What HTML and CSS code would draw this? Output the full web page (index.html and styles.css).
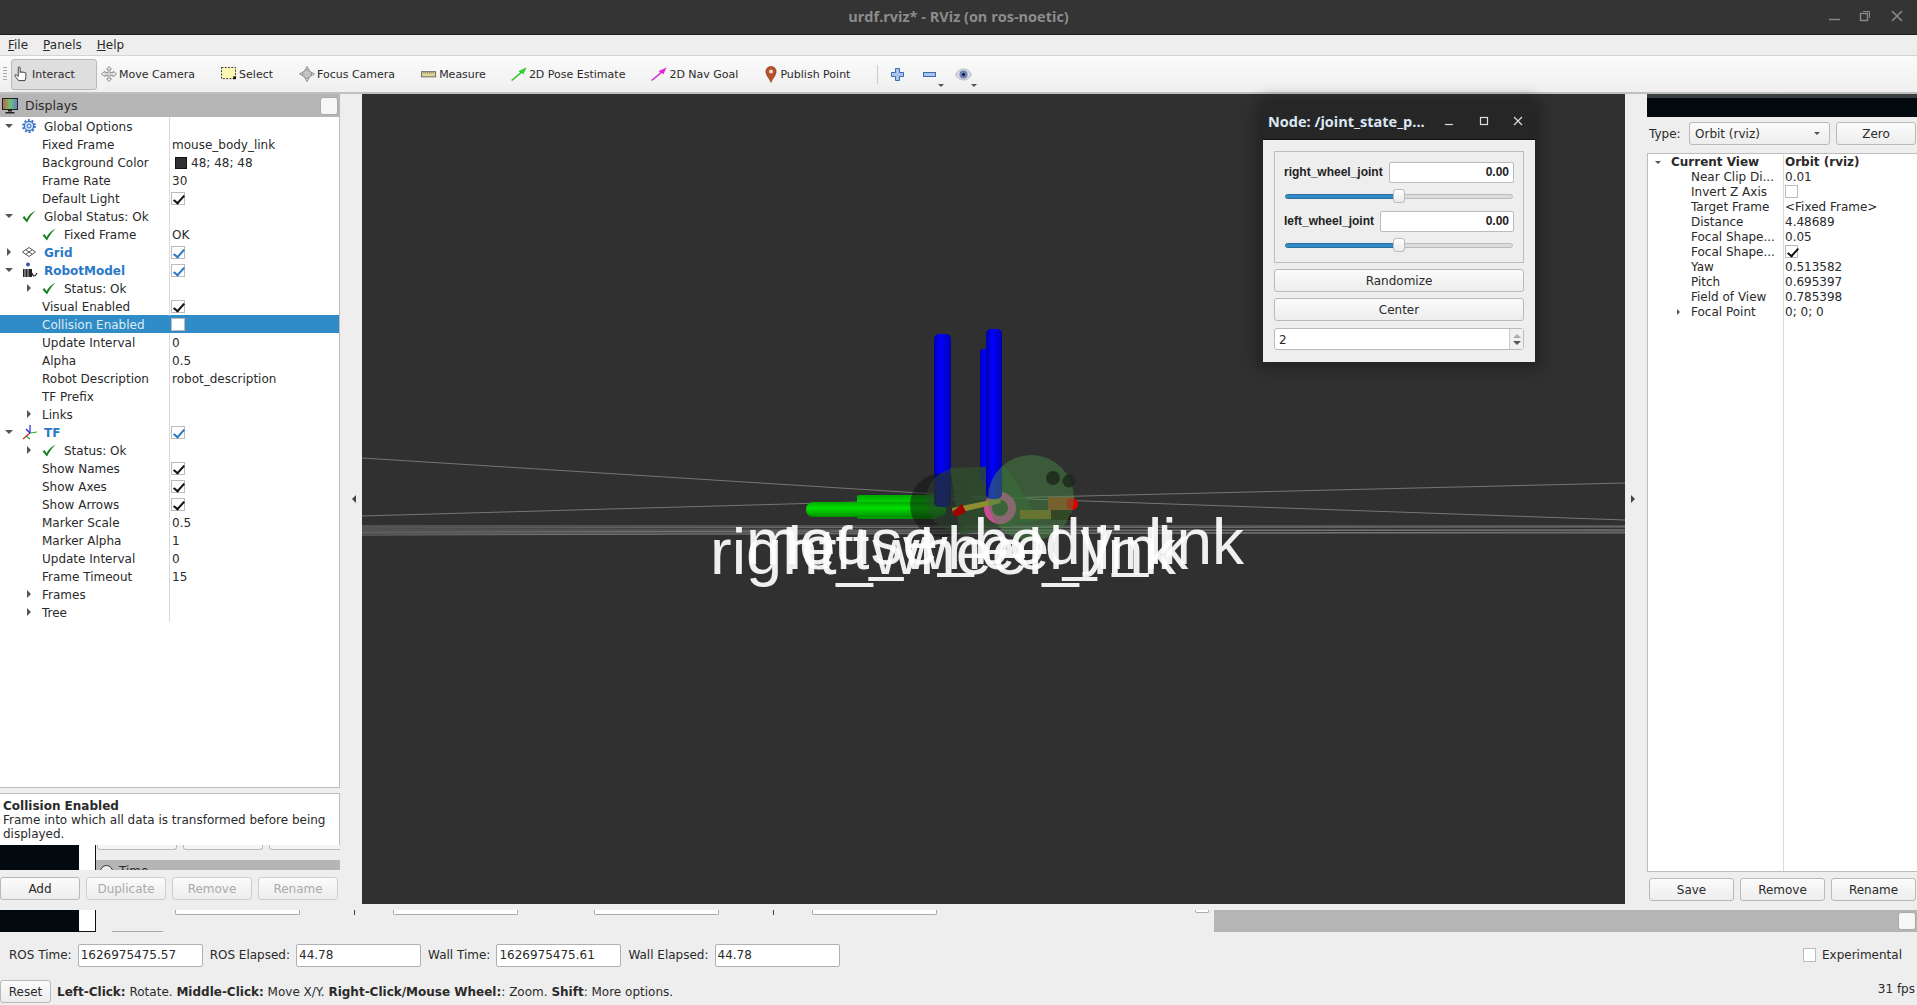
FILE: index.html
```html
<!DOCTYPE html>
<html lang="en">
<head>
<meta charset="utf-8">
<title>urdf.rviz* - RViz (on ros-noetic)</title>
<link rel="stylesheet" href="styles.css">
</head>
<body>
<div class="app">
  <header class="titlebar">
    <span class="title-text">urdf.rviz* - RViz (on ros-noetic)</span>
    <div class="wm-buttons">
      <svg width="14" height="14" viewBox="0 0 14 14"><path d="M1 10.5h11" stroke="#8a8a8a" stroke-width="1.4" fill="none"/></svg>
      <svg width="14" height="14" viewBox="0 0 14 14" fill="none" stroke="#8a8a8a"><rect x="1.5" y="4.5" width="7" height="7" stroke-width="1.4"/><path d="M4 2.5h6.5V9"/></svg>
      <svg width="14" height="14" viewBox="0 0 14 14"><path d="M2 2l10 10M12 2L2 12" stroke="#8a8a8a" stroke-width="1.6" fill="none"/></svg>
    </div>
  </header>
  <nav class="menubar">
    <span><u>F</u>ile</span><span><u>P</u>anels</span><span><u>H</u>elp</span>
  </nav>
  <div class="toolbar">
    <div class="grip"></div>
    <div class="tool active">
      <svg width="16" height="16" viewBox="0 0 17 17"><path d="M5 15.5C3 13 1.5 11.5 1 10c0-1.2 1.2-1 2-.2l1.5 1.4V2c0-1.4 2-1.4 2 0v5c.2-1.2 2-1.2 2.1 0 .3-1 2-1 2 .3.4-.9 2-.7 2 .6v3.5c0 1.800-.5 3-1 4.100z" fill="#fff" stroke="#222" stroke-width=".9"/></svg>
      <span>Interact</span>
    </div>
    <div class="tool">
      <svg width="16" height="16" viewBox="0 0 17 17" fill="none" stroke="#888"><path d="M8.500.5l2.500 3H9.500v3.500H13V5.500l3.500 3-3.500 3V10H9.500v3.500H11l-2.500 3-2.500-3h1.500V10H4v1.500l-3.500-3 3.500-3V7h3.500V3.500H6z" fill="#f4f4f4"/><path d="M8.500 4v9M4 8.500h9" stroke="#bbb"/></svg>
      <span>Move Camera</span>
    </div>
    <div class="tool">
      <svg width="16" height="14" viewBox="0 0 17 15"><rect x=".5" y=".5" width="15" height="12" fill="#fbf7b0" stroke="#222" stroke-dasharray="2 1.500"/><rect x="13" y="10" width="3" height="3" fill="#111"/></svg>
      <span>Select</span>
    </div>
    <div class="tool">
      <svg width="16" height="16" viewBox="0 0 17 17" fill="none" stroke="#888"><path d="M8.500.5l2 3.500h-4zM8.500 16.500l2-3.500h-4zM.5 8.500L4 6.500v4zM16.500 8.500L13 6.500v4z" fill="#eee"/><circle cx="8.500" cy="8.500" r="4.500" fill="#e8e8e8"/><path d="M8.500 4v9M4 8.500h9M6.200 4.500v8M10.800 4.500v8M4.500 6.200h8M4.500 10.800h8" stroke="#999" stroke-width=".6"/></svg>
      <span>Focus Camera</span>
    </div>
    <div class="tool tight">
      <svg width="16" height="9" viewBox="0 0 17 9"><rect x=".5" y="1.500" width="15" height="5.500" fill="#dfd68f" stroke="#666"/><path d="M3 1.500v2M5 1.500v2M7 1.500v2M9 1.500v2M11 1.500v2M13 1.500v2" stroke="#666" stroke-width=".7"/></svg>
      <span>Measure</span>
    </div>
    <div class="tool">
      <svg width="16" height="14" viewBox="0 0 17 14"><path d="M.5 13.500L10 5.500 8.500 4 16 .5 13 7l-1.500-1.300L1.500 14z" fill="#1ee61e" stroke="#0a8a0a" stroke-width=".4"/></svg>
      <span>2D Pose Estimate</span>
    </div>
    <div class="tool">
      <svg width="16" height="14" viewBox="0 0 17 14"><path d="M.5 13.500L10 5.500 8.500 4 16 .5 13 7l-1.500-1.300L1.500 14z" fill="#f01ee0" stroke="#a010a0" stroke-width=".4"/></svg>
      <span>2D Nav Goal</span>
    </div>
    <div class="tool pin-tool">
      <svg width="12" height="17" viewBox="0 0 12 17"><path d="M6 16.500C4.500 12.500.8 9.500.8 5.500a5.200 5.200 0 0 1 10.400 0C11.200 9.500 7.500 12.500 6 16.500z" fill="#b5502a" stroke="#7a3a1a" stroke-width=".5"/><circle cx="6" cy="5.500" r="2" fill="#f5e0d0"/></svg>
      <span>Publish Point</span>
    </div>
    <div class="tool-sep"></div>
    <div class="mini-tool">
      <svg width="13" height="13" viewBox="0 0 13 13"><path d="M4.500.5h4v4h4v4h-4v4h-4v-4h-4v-4h4z" fill="#a9c4e8" stroke="#3b6cb0"/></svg>
    </div>
    <div class="mini-tool">
      <svg width="13" height="13" viewBox="0 0 13 13"><rect x=".5" y="4.500" width="12" height="4" fill="#a9c4e8" stroke="#3b6cb0"/></svg>
      <i class="drop"></i>
    </div>
    <div class="mini-tool">
      <svg width="17" height="13" viewBox="0 0 17 13"><path d="M.5 6.500C3 2 6 1 8.500 1s5.500 1 8 5.500c-2.500 4.500-5.500 5.500-8 5.500S3 11 .5 6.500z" fill="#d5d8e8" stroke="#999" stroke-width=".6"/><circle cx="8.500" cy="6.500" r="4" fill="#6a80b8"/><circle cx="8.500" cy="6.500" r="1.500" fill="#111"/></svg>
      <i class="drop"></i>
    </div>
  </div>

  <main class="main">
    <section class="left-col">
      <div class="dock-head">
        <svg width="16" height="16" viewBox="0 0 16 16"><defs><linearGradient id="mon" x1="0" x2="1"><stop offset="0" stop-color="#c45a5a"/><stop offset=".5" stop-color="#6ac46a"/><stop offset="1" stop-color="#6a7ad0"/></linearGradient></defs><rect x=".5" y=".5" width="15" height="11" fill="url(#mon)" stroke="#222"/><path d="M6 12h4v1.500H6zM3.500 14h9v1.500h-9z" fill="#222"/></svg>
        <span class="dock-title">Displays</span>
        <span class="dock-btn"></span>
      </div>
      <div class="tree">
        <div class="row"><div class="name"><i class="slot l0"><b class="open"></b></i><i class="ico"><svg width="14" height="14" viewBox="0 0 14 14"><circle cx="7" cy="7" r="4.700" fill="#cfe0f8" stroke="#3a72c8" stroke-width="1.200"/><circle cx="7" cy="7" r="6" fill="none" stroke="#3a72c8" stroke-width="1.800" stroke-dasharray="2 1.770"/><circle cx="7" cy="7" r="2" fill="none" stroke="#3a72c8"/></svg></i><span>Global Options</span></div><div class="val"></div></div>
        <div class="row"><div class="name l1">Fixed Frame</div><div class="val">mouse_body_link</div></div>
        <div class="row"><div class="name l1">Background Color</div><div class="val swatch-val"><i class="swatch"></i>48; 48; 48</div></div>
        <div class="row"><div class="name l1">Frame Rate</div><div class="val">30</div></div>
        <div class="row"><div class="name l1">Default Light</div><div class="val"><i class="cb on"></i></div></div>
        <div class="row"><div class="name"><i class="slot l0"><b class="open"></b></i><i class="ico"><svg class="ok" width="14" height="13" viewBox="0 0 14 13"><path d="M.5 7.500L2.500 6l2 3.200C6.500 5.500 9.500 2.500 13.500.5 10.500 3.500 7.500 7.500 5 12.500z"/></svg></i><span>Global Status: Ok</span></div><div class="val"></div></div>
        <div class="row"><div class="name l1"><i class="ico"><svg class="ok" width="14" height="13" viewBox="0 0 14 13"><path d="M.5 7.500L2.500 6l2 3.200C6.500 5.500 9.500 2.500 13.500.5 10.500 3.500 7.500 7.500 5 12.500z"/></svg></i><span>Fixed Frame</span></div><div class="val">OK</div></div>
        <div class="row"><div class="name blue"><i class="slot l0"><b class="closed"></b></i><i class="ico"><svg width="14" height="10" viewBox="0 0 14 10" fill="none" stroke="#444" stroke-width=".9"><path d="M7 .5l6.500 4.500L7 9.500.5 5zM3.800 2.800l6.500 4.500M10.200 2.800L3.800 7.300"/></svg></i><span>Grid</span></div><div class="val"><i class="cb on blue-check"></i></div></div>
        <div class="row"><div class="name blue"><i class="slot l0"><b class="open"></b></i><i class="ico"><svg width="16" height="16" viewBox="0 0 16 16"><circle cx="6" cy="2.500" r="2" fill="#3355aa"/><rect x="1" y="7" width="9" height="8" fill="#222"/><path d="M3 7v8M6 7v8" stroke="#eee" stroke-width=".8"/><path d="M10 11c1 4 3 4 5 0" fill="none" stroke="#222" stroke-width="1.200"/></svg></i><span>RobotModel</span></div><div class="val"><i class="cb on blue-check"></i></div></div>
        <div class="row"><div class="name l1"><i class="slot l1s"><b class="closed"></b></i><i class="ico"><svg class="ok" width="14" height="13" viewBox="0 0 14 13"><path d="M.5 7.500L2.500 6l2 3.200C6.500 5.500 9.500 2.500 13.500.5 10.500 3.500 7.500 7.500 5 12.500z"/></svg></i><span>Status: Ok</span></div><div class="val"></div></div>
        <div class="row"><div class="name l1">Visual Enabled</div><div class="val"><i class="cb on"></i></div></div>
        <div class="row selected"><div class="name l1">Collision Enabled</div><div class="val"><i class="cb"></i></div></div>
        <div class="row"><div class="name l1">Update Interval</div><div class="val">0</div></div>
        <div class="row"><div class="name l1">Alpha</div><div class="val">0.5</div></div>
        <div class="row"><div class="name l1">Robot Description</div><div class="val">robot_description</div></div>
        <div class="row"><div class="name l1">TF Prefix</div><div class="val"></div></div>
        <div class="row"><div class="name l1"><i class="slot l1s"><b class="closed"></b></i><span class="noicon">Links</span></div><div class="val"></div></div>
        <div class="row"><div class="name blue"><i class="slot l0"><b class="open"></b></i><i class="ico"><svg width="16" height="15" viewBox="0 0 16 15" fill="none" stroke-width="1.200"><path d="M8 8l-7 6" stroke="#e02020"/><path d="M8 8V0" stroke="#2020e0"/><path d="M8 8l7-1" stroke="#20b020"/><path d="M4 11l4 3" stroke="#20b020"/><path d="M8 8L4 4" stroke="#2020e0"/></svg></i><span>TF</span></div><div class="val"><i class="cb on blue-check"></i></div></div>
        <div class="row"><div class="name l1"><i class="slot l1s"><b class="closed"></b></i><i class="ico"><svg class="ok" width="14" height="13" viewBox="0 0 14 13"><path d="M.5 7.500L2.500 6l2 3.200C6.500 5.500 9.500 2.500 13.500.5 10.500 3.500 7.500 7.500 5 12.500z"/></svg></i><span>Status: Ok</span></div><div class="val"></div></div>
        <div class="row"><div class="name l1">Show Names</div><div class="val"><i class="cb on"></i></div></div>
        <div class="row"><div class="name l1">Show Axes</div><div class="val"><i class="cb on"></i></div></div>
        <div class="row"><div class="name l1">Show Arrows</div><div class="val"><i class="cb on"></i></div></div>
        <div class="row"><div class="name l1">Marker Scale</div><div class="val">0.5</div></div>
        <div class="row"><div class="name l1">Marker Alpha</div><div class="val">1</div></div>
        <div class="row"><div class="name l1">Update Interval</div><div class="val">0</div></div>
        <div class="row"><div class="name l1">Frame Timeout</div><div class="val">15</div></div>
        <div class="row"><div class="name l1"><i class="slot l1s"><b class="closed"></b></i><span class="noicon">Frames</span></div><div class="val"></div></div>
        <div class="row"><div class="name l1"><i class="slot l1s"><b class="closed"></b></i><span class="noicon">Tree</span></div><div class="val"></div></div>
      </div>
      <div class="h-split"></div>
      <div class="desc"><strong>Collision Enabled</strong><br>Frame into which all data is transformed before being displayed.</div>
      <div class="glitch-left">
        <div class="black"></div>
        <div class="glitch-white"></div>
        <div class="glitch-stack">
          <div class="glitch-btns"><i></i><i></i><i></i></div>
          <div class="glitch-time"><i class="clock"></i><span>Time</span></div>
        </div>
      </div>
      <div class="btn-row">
        <button class="btn">Add</button>
        <button class="btn dis">Duplicate</button>
        <button class="btn dis">Remove</button>
        <button class="btn dis">Rename</button>
      </div>
    </section>

    <div class="v-split"><i class="tri-left"></i></div>

    <div class="viewport">
      <svg class="scene" width="1263" height="810" viewBox="362 94 1263 810">
        <defs>
          <linearGradient id="cyl" x1="0" x2="1"><stop offset="0" stop-color="#0000a8"/><stop offset=".4" stop-color="#0000ff"/><stop offset="1" stop-color="#0000b0"/></linearGradient>
          <linearGradient id="gr" x1="0" x2="0" y1="0" y2="1"><stop offset="0" stop-color="#00a800"/><stop offset=".4" stop-color="#00e000"/><stop offset="1" stop-color="#009000"/></linearGradient>
          <filter id="soft" x="-5%" y="-20%" width="110%" height="140%"><feGaussianBlur stdDeviation=".7"/></filter>
        </defs>
        <g stroke="#9a9a9a" stroke-width="1" fill="none" opacity=".65">
          <path d="M362 458L1000 498L1625 520"/>
          <path d="M362 516L1000 498L1625 483"/>
          <path d="M362 526H1625M362 528L1625 527M362 530H1625M362 532L1625 530M362 533H1625M362 535L1625 532"/>
        </g>
        <rect x="857" y="495" width="80" height="24" rx="2" fill="url(#gr)"/>
        <rect x="806" y="502" width="140" height="15" rx="7" fill="url(#gr)"/>
        <rect x="980" y="349" width="10" height="135" rx="3" fill="url(#cyl)"/>
        <rect x="934" y="334" width="17" height="173" rx="5" fill="url(#cyl)"/>
        <circle cx="942" cy="505" r="32" fill="#101010" fill-opacity=".5"/>
        <path d="M950 468L1005 466L1040 520L960 535Z" fill="#304c30" fill-opacity=".8"/>
        <circle cx="958" cy="500" r="32" fill="#2e4c2e" fill-opacity=".45"/>
        <circle cx="1000" cy="508" r="12" fill="none" stroke="#cc4c98" stroke-width="8"/>
        <path d="M952 508L1000 498L1001 503L953 514Z" fill="#8e8e30"/>
        <path d="M952 512L962 504L966 512L956 517Z" fill="#a00000"/>
        <rect x="1048" y="497" width="26" height="13" fill="#a84018"/>
        <rect x="1020" y="510" width="31" height="9" fill="#8a6420"/>
        <rect x="1051" y="510" width="20" height="10" fill="#200c08"/>
        <circle cx="1072" cy="504" r="6" fill="#e00000"/>
        <rect x="986" y="329" width="16" height="170" rx="5" fill="url(#cyl)"/>
        <circle cx="1031" cy="498" r="43" fill="#448444" fill-opacity=".5"/>
        <circle cx="1053" cy="478" r="7" fill="#1c2a1c" fill-opacity=".85"/>
        <circle cx="1069" cy="481" r="6.500" fill="#1c2a1c" fill-opacity=".85"/>
        <g class="labels" filter="url(#soft)">
          <text class="lab-right" x="710" y="574">right_wheel_link</text>
          <text class="lab-left" x="788" y="569">left_wheel_link</text>
          <text class="lab-mouse" x="746" y="564">mouse_body_link</text>
        </g>
      </svg>
    </div>

    <div class="v-split"><i class="tri-right"></i></div>

    <aside class="right-col">
      <div class="black-top"></div>
      <div class="type-row">
        <label>Type:</label>
        <div class="select">Orbit (rviz)<b class="open small"></b></div>
        <button class="btn zero">Zero</button>
      </div>
      <div class="view-tree">
        <div class="vrow strong"><div class="vname"><b class="open small vopen"></b>Current View</div><div class="vval">Orbit (rviz)</div></div>
        <div class="vrow"><div class="vname sub">Near Clip Di...</div><div class="vval">0.01</div></div>
        <div class="vrow"><div class="vname sub">Invert Z Axis</div><div class="vval"><i class="cb"></i></div></div>
        <div class="vrow"><div class="vname sub">Target Frame</div><div class="vval">&lt;Fixed Frame&gt;</div></div>
        <div class="vrow"><div class="vname sub">Distance</div><div class="vval">4.48689</div></div>
        <div class="vrow"><div class="vname sub">Focal Shape...</div><div class="vval">0.05</div></div>
        <div class="vrow"><div class="vname sub">Focal Shape...</div><div class="vval"><i class="cb on"></i></div></div>
        <div class="vrow"><div class="vname sub">Yaw</div><div class="vval">0.513582</div></div>
        <div class="vrow"><div class="vname sub">Pitch</div><div class="vval">0.695397</div></div>
        <div class="vrow"><div class="vname sub">Field of View</div><div class="vval">0.785398</div></div>
        <div class="vrow"><div class="vname sub"><b class="closed vclosed"></b>Focal Point</div><div class="vval">0; 0; 0</div></div>
        <div class="vfill"><div class="vfill-l"></div></div>
      </div>
      <div class="btn-row right">
        <button class="btn">Save</button>
        <button class="btn">Remove</button>
        <button class="btn">Rename</button>
      </div>
    </aside>
  </main>

  <div class="glitch-strip">
    <div class="black"></div>
    <div class="glitch-white"></div>
    <i class="r0"></i><i class="rem r1"></i><i class="tick t1"></i><i class="rem r2"></i><i class="rem r3"></i><i class="tick t2"></i><i class="rem r4"></i><i class="rem r5"></i>
    <div class="gray-bar"><span class="dock-btn"></span></div>
  </div>

  <div class="time-row">
    <label>ROS Time:</label><input class="time-input" value="1626975475.57">
    <label>ROS Elapsed:</label><input class="time-input" value="44.78">
    <label>Wall Time:</label><input class="time-input" value="1626975475.61">
    <label>Wall Elapsed:</label><input class="time-input" value="44.78">
    <span class="spacer"></span>
    <i class="cb exp"></i><label>Experimental</label>
  </div>

  <div class="status-row">
    <button class="btn reset">Reset</button>
    <span class="hint"><strong>Left-Click:</strong> Rotate. <strong>Middle-Click:</strong> Move X/Y. <strong>Right-Click/Mouse Wheel:</strong>: Zoom. <strong>Shift</strong>: More options.</span>
    <span class="spacer"></span>
    <span class="fps">31 fps</span>
  </div>

  <div class="node-window">
    <div class="node-title">
      <span>Node: /joint_state_p...</span>
      <div class="node-wm">
        <svg width="12" height="12" viewBox="0 0 12 12"><path d="M1 9.500h8" stroke="#ddd" stroke-width="1.200"/></svg>
        <svg width="12" height="12" viewBox="0 0 12 12"><rect x="2.500" y="2.500" width="7" height="7" fill="none" stroke="#ddd" stroke-width="1.200"/></svg>
        <svg width="12" height="12" viewBox="0 0 12 12"><path d="M2 2l8 8M10 2l-8 8" stroke="#ddd" stroke-width="1.200"/></svg>
      </div>
    </div>
    <div class="node-body">
      <div class="joint-box">
        <div class="joint-line"><span class="joint-name">right_wheel_joint</span><input class="joint-input" value="0.00"></div>
        <div class="slider"><div class="slider-fill"></div><div class="slider-handle"></div></div>
        <div class="joint-line"><span class="joint-name">left_wheel_joint</span><input class="joint-input" value="0.00"></div>
        <div class="slider"><div class="slider-fill"></div><div class="slider-handle"></div></div>
      </div>
      <button class="btn wide">Randomize</button>
      <button class="btn wide">Center</button>
      <div class="spin"><span class="spin-val">2</span><div class="spin-arrows"><b class="up"></b><b class="down"></b></div></div>
    </div>
  </div>
</div>
</body>
</html>
```
FILE: styles.css
```css
* { box-sizing: border-box; }
html, body { margin: 0; padding: 0; overflow: hidden; }
body { font-family: "DejaVu Sans", sans-serif; font-size: 12px; color: #2a2a2a; background: #eee; }
i, b { font-style: normal; display: inline-block; }

.app { width: 1917px; height: 1005px; display: flex; flex-direction: column; position: relative; overflow: hidden; background: #eee; }

.titlebar { height: 35px; flex: none; background: #343434; border-bottom: 1px solid #1c1c1c; display: flex; align-items: center; justify-content: center; position: relative; }
.title-text { font-family: "Open Sans", sans-serif; font-weight: 700; font-size: 14.5px; color: #8c8c8c; margin-top: -2px; }
.wm-buttons { position: absolute; right: 13px; top: 9px; display: flex; gap: 17px; }

.menubar { height: 20px; flex: none; background: #eee; display: flex; padding-left: 8px; gap: 15px; align-items: center; font-size: 12px; }
.menubar u { text-decoration: underline; }

.toolbar { height: 39px; flex: none; display: flex; align-items: center; gap: 3px; background: linear-gradient(#fbfbfb, #efefef); border-top: 1px solid #d4d4d4; border-bottom: 2px solid #bfbfbf; padding-left: 3px; font-size: 11px; }
.grip { width: 4px; height: 16px; margin-right: 1px; background-image: radial-gradient(#aaa 40%, transparent 45%); background-size: 2px 3px; }
.tool { height: 31px; display: flex; align-items: center; gap: 2px; padding: 0 22px 0 1px; white-space: nowrap; }
.tool span { padding-top: 1px; }
.tool.active { background: #dedede; border: 1px solid #b8b8b8; border-radius: 3px; padding: 0 21px 0 2px; }
.tool.tight { padding-right: 21px; }
.tool svg { flex: none; }
.pin-tool { gap: 3px; padding-left: 2px; padding-right: 24px; }
.tool-sep { width: 1px; height: 19px; background: #ccc; margin-right: 10px; }
.mini-tool { width: 29px; height: 31px; display: flex; align-items: center; position: relative; }
.drop { position: absolute; left: 15px; bottom: 3px; width: 0; height: 0; border: 3px solid transparent; border-top: 3px solid #555; border-bottom: 0; }
.mini-tool:last-child .drop { left: 16px; }

.main { height: 810px; flex: none; display: flex; }

.left-col { width: 340px; flex: none; display: flex; flex-direction: column; }
.dock-head { height: 23px; flex: none; background: #b5b5b5; display: flex; align-items: center; padding: 0 2px 0 2px; gap: 7px; }
.dock-title { flex: 1; font-size: 12.5px; }
.dock-btn { width: 18px; height: 18px; background: #f6f6f6; border: 1px solid #aaa; border-radius: 3px; display: block; }

.tree { flex: 1; min-height: 0; background: #fff; border-right: 1px solid #bdbdbd; border-bottom: 1px solid #bdbdbd; }
.row { height: 18px; display: grid; grid-template-columns: 170px 1fr; line-height: 18px; }
.name { display: flex; align-items: center; border-right: 1px solid #d9d9d9; height: 100%; white-space: nowrap; padding-top: 1px; }
.name.l1 { padding-left: 42px; }
.name.l1:has(.slot) { padding-left: 20px; }
.name.blue span { color: #2b78c8; font-weight: 700; }
.slot { width: 22px; height: 17px; display: flex; align-items: center; padding-left: 5px; margin-top: -2px; }
.slot .closed { margin-left: 2px; }
.slot.l1s { padding-left: 5px; }
.ico { width: 22px; height: 17px; display: flex; align-items: center; margin-top: -2px; }
.val { padding: 1px 0 0 2px; display: flex; align-items: center; white-space: nowrap; }
.swatch-val { padding-left: 5px; }
.swatch { width: 12px; height: 12px; background: #303030; border: 1px solid #111; margin-right: 4px; }
.ok { fill: #17801f; }
.open { width: 0; height: 0; border-left: 4px solid transparent; border-right: 4px solid transparent; border-top: 4px solid #555; }
.closed { width: 0; height: 0; border-top: 4px solid transparent; border-bottom: 4px solid transparent; border-left: 4px solid #555; }
.open.small { border-left-width: 3.500px; border-right-width: 3.500px; border-top-width: 3.500px; }

.cb { width: 14px; height: 13px; background: #fff; border: 1px solid #bbb; display: block; position: relative; }
.val .cb { margin: -2px 0 0 -1px; }
.cb.on::after { content: ""; position: absolute; left: 4px; top: 0; width: 4px; height: 9px; border: solid #111; border-width: 0 2px 2px 0; transform: rotate(38deg) skewX(-4deg); }
.cb.blue-check::after { border-color: #2b78c8; }

.selected { background: #308cc6; }
.selected .name { color: #dfeaf3; border-right: none; }

.h-split { height: 5px; flex: none; }
.desc { height: 52px; flex: none; background: #fff; border: 1px solid #bdbdbd; border-width: 1px 1px 0 0; padding: 5px 3px 0; line-height: 14px; font-size: 12px; }

.glitch-left { height: 25px; flex: none; display: flex; width: 340px; }
.black { width: 79px; flex: none; background: #02090f; }
.glitch-white { width: 17px; flex: none; background: #fff; border-right: 1px solid #111; }
.glitch-stack { flex: 1; min-width: 0; overflow: hidden; display: flex; flex-direction: column; }
.glitch-btns { height: 15px; flex: none; display: flex; gap: 6px; padding-left: 1px; }
.glitch-btns i { width: 80px; height: 5px; flex: none; border: 1px solid #bbb; border-top: 0; border-radius: 0 0 3px 3px; background: #f4f4f4; }
.glitch-time { flex: 1; min-height: 0; background: #b5b5b5; display: flex; align-items: flex-start; gap: 6px; padding: 4px 0 0 4px; overflow: hidden; line-height: 14px; }
.clock { width: 13px; height: 13px; border: 1px solid #333; border-radius: 50%; background: #eee; margin-top: 1px; flex: none; }

.btn-row { height: 34px; flex: none; display: flex; gap: 6px; padding-top: 7px; }
.btn { font-family: inherit; font-size: 12px; color: #2a2a2a; height: 23px; width: 80px; padding: 0; background: linear-gradient(#fbfbfb, #ededed); border: 1px solid #b9b9b9; border-radius: 3px; }
.btn.dis { color: #aaa; border-color: #cfcfcf; }

.v-split { width: 22px; flex: none; display: flex; align-items: center; justify-content: center; }
.tri-left { width: 0; height: 0; margin-left: 6px; border-top: 4px solid transparent; border-bottom: 4px solid transparent; border-right: 4px solid #444; }
.tri-right { width: 0; height: 0; margin-right: 6px; border-top: 4px solid transparent; border-bottom: 4px solid transparent; border-left: 4px solid #444; }

.viewport { width: 1263px; flex: none; background: #303030; overflow: hidden; }
.scene { display: block; }
.labels text { font-family: "Liberation Sans", sans-serif; fill: #fff; fill-opacity: .92; }
.lab-right { font-size: 65px; }
.lab-left { font-size: 61px; }
.lab-mouse { font-size: 64px; }

.right-col { flex: 1; min-width: 0; display: flex; flex-direction: column; }
.black-top { height: 23px; flex: none; background: #02090f; border-top: 4px solid #3a3f42; }
.type-row { height: 36px; flex: none; display: flex; align-items: center; padding: 0 1px 3px 2px; }
.type-row label { width: 40px; flex: none; }
.select { width: 141px; height: 23px; display: flex; align-items: center; justify-content: space-between; padding: 0 9px 0 5px; background: linear-gradient(#fbfbfb, #ededed); border: 1px solid #b9b9b9; border-radius: 3px; }
.btn.zero { width: 80px; margin-left: 6px; }
.view-tree { flex: 1; min-height: 0; background: #fff; border: 1px solid #bdbdbd; border-right: 0; padding-top: 1px; display: flex; flex-direction: column; }
.vrow { height: 15px; display: grid; grid-template-columns: 136px 1fr; line-height: 15px; }
.vname { border-right: 1px solid #d9d9d9; height: 15px; white-space: nowrap; position: relative; padding-left: 24px; }
.vval { padding-left: 1px; white-space: nowrap; }
.vval .cb { width: 13px; height: 13px; margin: 0; }
.vfill { flex: 1; }
.vfill-l { width: 136px; height: 100%; border-right: 1px solid #d9d9d9; }
.vrow.strong { font-weight: 700; }
.vrow.strong .vname { padding-left: 23px; }
.vname.sub { padding-left: 43px; }
.vopen { position: absolute; left: 7px; top: 6px; }
.vclosed { position: absolute; left: 29px; top: 4px; border-top-width: 3.500px; border-bottom-width: 3.500px; border-left-width: 3.500px; }
.btn-row.right { height: 32px; padding: 6px 0 0 2px; gap: 6px; }
.btn-row.right .btn { width: 85px; }

.glitch-strip { height: 28px; flex: none; display: flex; padding-top: 6px; }
.glitch-strip .glitch-white { border-bottom: 1px solid #111; }
.r0 { width: 51px; height: 1px; margin-left: 16px; align-self: flex-end; background: #aaa; flex: none; }
.rem { height: 5px; border: 1px solid #aaa; border-top: 0; border-radius: 0 0 2px 2px; background: #fff; flex: none; }
.r1 { width: 125px; margin-left: 12px; }
.t1 { margin-left: 54px; }
.r2 { width: 125px; margin-left: 38px; }
.r3 { width: 125px; margin-left: 76px; }
.t2 { margin-left: 54px; }
.r4 { width: 125px; margin-left: 38px; }
.r5 { width: 14px; margin-left: 258px; height: 3px; }
.tick { width: 1px; height: 5px; background: #444; flex: none; }
.gray-bar { flex: 1; margin-left: 5px; background: #b5b5b5; display: flex; justify-content: flex-end; align-items: center; padding-right: 1px; }

.time-row { height: 43px; flex: none; display: flex; align-items: center; padding: 3px 15px 0 9px; }
.time-row label { white-space: nowrap; margin-right: 6px; }
.time-input { width: 125px; height: 23px; font: inherit; font-size: 12px; color: #2a2a2a; padding: 0 2px; margin-right: 7px; border: 1px solid #b0b0b0; border-radius: 2px; background: #fff; }
.spacer { flex: 1; }
.cb.exp { width: 13px; height: 14px; margin-right: 6px; }
.time-row label:last-child { margin-right: 0; }

.status-row { height: 30px; flex: none; display: flex; align-items: center; padding: 3px 2px 0 0; }
.btn.reset { width: 51px; height: 23px; margin-right: 6px; }
.hint { white-space: nowrap; }
.fps { margin-top: -5px; }

.node-window { position: absolute; left: 1263px; top: 103px; width: 272px; height: 259px; border-radius: 7px 7px 0 0; box-shadow: 0 0 14px 6px rgba(0, 0, 0, .3); display: flex; flex-direction: column; }
.node-title { height: 37px; flex: none; background: #262626; border-radius: 7px 7px 0 0; border-bottom: 1px solid #111; display: flex; align-items: center; justify-content: space-between; padding: 0 11px 0 5px; color: #dbe8f5; font-family: "Open Sans", sans-serif; font-weight: 700; font-size: 14.5px; }
.node-wm { display: flex; gap: 22px; }
.node-body { flex: 1; background: #eee; padding: 11px 11px 0; display: flex; flex-direction: column; }
.joint-box { height: 112px; flex: none; border: 1px solid #bcbcbc; padding: 9px 9px 0 9px; }
.joint-line { height: 22px; display: flex; align-items: center; gap: 6px; }
.joint-name { font-family: "Liberation Sans", sans-serif; font-weight: 700; font-size: 12px; color: #222; white-space: nowrap; }
.joint-input { flex: 1; min-width: 0; height: 21px; padding: 0 4px; text-align: right; font-family: "Liberation Sans", sans-serif; font-weight: 700; font-size: 12px; color: #222; border: 1px solid #bbb; border-radius: 2px; background: #fff; }
.slider { height: 5px; margin: 11px 0 11px 1px; position: relative; background: #dcdcdc; border: 1px solid #bbb; border-radius: 3px; width: 228px; }
.slider-fill { width: 115px; height: 100%; background: #308cc6; border-radius: 3px 0 0 3px; outline: 1px solid #2a6f9e; }
.slider-handle { position: absolute; left: 107px; top: -6px; width: 12px; height: 14px; background: linear-gradient(#fff, #eaeaea); border: 1px solid #bbb; border-radius: 3px; }
.btn.wide { width: 100%; flex: none; height: 23px; margin-top: 6px; }
.spin { height: 22px; flex: none; margin-top: 7px; border: 1px solid #bbb; border-radius: 3px; background: #fff; display: flex; justify-content: space-between; align-items: center; padding-left: 4px; }
.spin-val { padding-top: 1px; }
.spin-arrows { width: 14px; height: 20px; border-left: 1px solid #ccc; background: #f0f0f0; display: flex; flex-direction: column; align-items: center; justify-content: center; gap: 3px; }
.up { width: 0; height: 0; border-left: 4px solid transparent; border-right: 4px solid transparent; border-bottom: 4px solid #aaa; }
.down { width: 0; height: 0; border-left: 4px solid transparent; border-right: 4px solid transparent; border-top: 4px solid #555; }
```
